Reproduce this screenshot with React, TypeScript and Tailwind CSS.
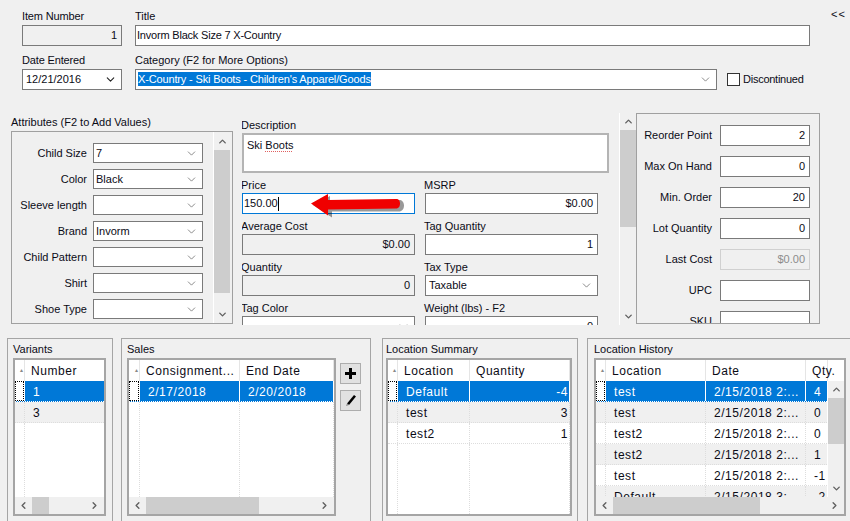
import type { ReactNode } from 'react';
import { ChevronDown, ChevronUp, ChevronLeft, ChevronRight } from 'lucide-react';
import clsx from 'clsx';

function Arrow({ dir, className }: { dir: 'up' | 'down' | 'left' | 'right'; className?: string }) {
  const Icon = { up: ChevronUp, down: ChevronDown, left: ChevronLeft, right: ChevronRight }[dir];
  return <Icon size={11} strokeWidth={3} className={clsx('text-[#606060]', className)} />;
}

function VScroll({ before, thumb }: { before: number; thumb: number }) {
  return (
    <div className="w-[17px] shrink-0 border-l border-white bg-[#f0f0f0] flex flex-col items-stretch">
      <div className="flex items-center justify-center" style={{ height: before }}>
        <Arrow dir="up" />
      </div>
      <div className="bg-[#cdcdcd]" style={{ height: thumb }} />
      <div className="flex-1 flex items-end justify-center pb-[3px]">
        <Arrow dir="down" />
      </div>
    </div>
  );
}

function HScroll({ before, thumb }: { before: number; thumb: number }) {
  return (
    <div className="h-[17px] shrink-0 bg-[#f0f0f0] flex items-stretch">
      <div className="flex items-center justify-center" style={{ width: before }}>
        <Arrow dir="left" />
      </div>
      <div className="bg-[#cdcdcd]" style={{ width: thumb }} />
      <div className="flex-1 flex items-center justify-end pr-[4px]">
        <Arrow dir="right" />
      </div>
    </div>
  );
}

function Label({ children }: { children: ReactNode }) {
  return <div className="h-[16px] leading-[16px] -ml-px whitespace-nowrap">{children}</div>;
}

function Input({
  value,
  right,
  disabled,
  dim,
  focus,
  tight,
  className,
}: {
  value?: ReactNode;
  right?: boolean;
  disabled?: boolean;
  dim?: boolean;
  focus?: boolean;
  tight?: boolean;
  className?: string;
}) {
  return (
    <div
      className={clsx(
        'h-[21px] border flex items-center leading-none whitespace-nowrap',
        tight ? 'px-px' : 'px-[4px]',
        right && 'justify-end',
        disabled ? 'bg-[#f0f0f0]' : 'bg-white',
        dim ? 'border-[#d0d0d0] text-[#8c8c8c]' : focus ? 'border-[#0078d7]' : 'border-[#7a7a7a]',
        className,
      )}
    >
      {value}
    </div>
  );
}

function Combo({ value, className, dark }: { value?: ReactNode; className?: string; dark?: boolean }) {
  return (
    <div className={clsx('border border-[#7a7a7a] bg-white flex items-center pr-[4px] leading-none', className)}>
      <div className="flex-1 whitespace-nowrap">{value}</div>
      <ChevronDown size={13} strokeWidth={dark ? 2 : 1.25} className={dark ? 'text-[#222]' : 'text-[#555]'} />
    </div>
  );
}

function Attr({ label, value }: { label: string; value?: string }) {
  return (
    <div className="flex items-center h-[20px]">
      <div className="w-[75px] text-right whitespace-nowrap">{label}</div>
      <Combo value={value} className="ml-[6px] w-[110px] h-[20px] pl-[2px]" />
    </div>
  );
}

function Stock({ label, value, disabled }: { label: string; value?: string; disabled?: boolean }) {
  return (
    <div className="flex items-center h-[21px] shrink-0">
      <div className="w-[75px] text-right whitespace-nowrap">{label}</div>
      <Input value={value} right disabled={disabled} dim={disabled} className="ml-[8px] w-[90px]" />
    </div>
  );
}

type Col = { name: string; w: number; right?: boolean };

function Grid({
  cols,
  rows,
  head,
  scrollBefore,
  scrollThumb,
  vscroll,
}: {
  cols: Col[];
  rows: string[][];
  head: number;
  scrollBefore?: number;
  scrollThumb?: number;
  vscroll?: boolean;
}) {
  return (
    <div className="h-[158px] border-2 border-[#a5a5a5] bg-white flex flex-col overflow-hidden text-[12px] tracking-[0.55px]">
      <div className="flex h-[21px] shrink-0">
        <div className="shrink-0 border-r border-[#e5e5e5] flex items-center justify-end text-[6px] text-[#888]" style={{ width: head }}>
          ▴
        </div>
        {cols.map((c) => (
          <div key={c.name} className="shrink-0 border-r border-[#e5e5e5] flex items-center pl-[6px] whitespace-nowrap" style={{ width: c.w }}>
            {c.name}
          </div>
        ))}
      </div>
      <div className="flex-1 min-h-0 flex">
        <div className="flex-1 min-w-0 flex flex-col overflow-hidden">
          {rows.map((r, i) => (
            <div
              key={i}
              className={clsx(
                'flex h-[21px] shrink-0 border-b border-dotted',
                i === 0 ? 'bg-[#0078d7] text-white border-white' : i % 2 ? 'bg-[#f0f0f0] border-[#dddddd]' : 'border-[#dddddd]',
              )}
            >
              <div
                className={clsx('shrink-0 border-r border-dotted', i === 0 ? 'bg-white border-white' : 'border-[#dddddd]')}
                style={{ width: head }}
              >
                {i === 0 && <div className="h-full border border-dotted border-black" />}
              </div>
              {cols.map((c, j) => (
                <div
                  key={c.name}
                  className={clsx(
                    'shrink-0 flex items-center pt-px whitespace-nowrap overflow-hidden',
                    c.right ? 'justify-end pl-[8px] pr-[1px]' : 'pl-[8px]',
                    i === 0 ? 'border-r border-white' : 'border-r border-dotted border-[#dddddd]',
                  )}
                  style={{ width: c.w }}
                >
                  {r[j]}
                </div>
              ))}
            </div>
          ))}
          <div className="flex-1 flex">
            <div className="shrink-0 border-r border-dotted border-[#dddddd]" style={{ width: head }} />
            {cols.map((c) => (
              <div key={c.name} className="shrink-0 border-r border-dotted border-[#dddddd]" style={{ width: c.w }} />
            ))}
          </div>
        </div>
        {vscroll && <VScroll before={17} thumb={46} />}
      </div>
      {scrollThumb !== undefined && <HScroll before={scrollBefore ?? 17} thumb={scrollThumb} />}
    </div>
  );
}

function Group({ title, className, children }: { title: string; className?: string; children: ReactNode }) {
  return (
    <div className={clsx('h-[200px] shrink-0 border border-[#a5a5a5]', className)}>
      <div className="h-[19px] leading-[20px] whitespace-nowrap">{title}</div>
      {children}
    </div>
  );
}

export default function App() {
  return (
    <div className="relative w-[850px] h-[521px] overflow-hidden bg-[#f0f0f0] text-[11px] text-[#0b0b16] font-['Liberation_Sans',sans-serif]">
      {/* top fields */}
      <div className="h-[113px] flex pl-[22px] pt-[8px]">
        <div className="w-[100px] shrink-0">
          <div className="h-[17px] leading-[16px] tracking-[-0.15px]">Item Number</div>
          <Input value="1" right disabled />
          <div className="mt-[5px] h-[18px] leading-[18px] tracking-[-0.15px]">Date Entered</div>
          <Combo value="12/21/2016" className="h-[21px] pl-[3px]" dark />
        </div>
        <div className="ml-[13px] w-[675px] shrink-0">
          <div className="h-[17px] leading-[16px]">Title</div>
          <Input value={<span className="tracking-[-0.2px]">Invorm Black Size 7 X-Country</span>} tight />
          <div className="mt-[5px] h-[18px] leading-[18px]">Category (F2 for More Options)</div>
          <div className="flex items-center">
            <Combo
              value={
                <span className="bg-[#0078d7] text-white py-px tracking-[-0.15px]">
                  X-Country - Ski Boots - Children's Apparel/Goods
                </span>
              }
              className="w-[582px] h-[21px] pl-[2px] shrink-0"
            />
            <div className="ml-[10px] w-[13px] h-[13px] border border-[#333] bg-white shrink-0" />
            <span className="ml-[3px] tracking-[-0.25px]">Discontinued</span>
          </div>
        </div>
        <div className="ml-[21px] leading-[10px] mt-[1px] tracking-[1px]">&lt;&lt;</div>
      </div>

      {/* middle */}
      <div className="h-[212px] flex pl-[11px] overflow-hidden">
        <div className="w-[222px] shrink-0 mt-[1px]">
          <div className="h-[17px] leading-[16px] whitespace-nowrap">Attributes (F2 to Add Values)</div>
          <div className="h-[193px] border border-[#a0a0a0] flex">
            <div className="flex-1 pt-[11px] flex flex-col gap-[6px]">
              <Attr label="Child Size" value="7" />
              <Attr label="Color" value="Black" />
              <Attr label="Sleeve length" />
              <Attr label="Brand" value="Invorm" />
              <Attr label="Child Pattern" />
              <Attr label="Shirt" />
              <Attr label="Shoe Type" />
            </div>
            <VScroll before={18} thumb={143} />
            <div className="w-[2px]" />
          </div>
        </div>

        <div className="ml-[9px] w-[377px] shrink-0 pt-[4px] overflow-hidden">
          <Label>Description</Label>
          <div className="w-[367px] h-[40px] border-2 border-[#b4b4b4] bg-white px-[3px] pt-[2px] leading-[16px]">
            Ski <span className="underline decoration-dotted decoration-[#e06060] underline-offset-2">Boots</span>
          </div>
          <div className="mt-[4px] grid grid-cols-[173px_173px] gap-x-[10px] gap-y-[4px]">
            <div>
              <Label>Price</Label>
              <Input
                value={
                  <>
                    150.00<span className="inline-block w-px h-[14px] bg-black" />
                  </>
                }
                focus
                tight
              />
            </div>
            <div>
              <Label>MSRP</Label>
              <Input value="$0.00" right />
            </div>
            <div>
              <Label>Average Cost</Label>
              <Input value="$0.00" right disabled />
            </div>
            <div>
              <Label>Tag Quantity</Label>
              <Input value="1" right />
            </div>
            <div>
              <Label>Quantity</Label>
              <Input value="0" right disabled />
            </div>
            <div>
              <Label>Tax Type</Label>
              <Combo value="Taxable" className="h-[21px] pl-[3px]" />
            </div>
            <div>
              <Label>Tag Color</Label>
              <Combo className="h-[21px] pl-[2px]" />
            </div>
            <div>
              <Label>Weight (lbs) - F2</Label>
              <Input value="0" right />
            </div>
          </div>
        </div>

        <VScroll before={17} thumb={97} />

        <div className="w-[184px] shrink-0 h-[211px] border border-[#a0a0a0] pt-[11px] flex flex-col gap-[10px] overflow-hidden">
          <Stock label="Reorder Point" value="2" />
          <Stock label="Max On Hand" value="0" />
          <Stock label="Min. Order" value="20" />
          <Stock label="Lot Quantity" value="0" />
          <Stock label="Last Cost" value="$0.00" disabled />
          <Stock label="UPC" />
          <Stock label="SKU" />
        </div>
      </div>

      {/* bottom groups */}
      <div className="mt-[13px] flex pl-[7px] items-start">
        <Group title="Variants" className="w-[106px] px-[5px]">
          <div className="w-[93px]">
            <Grid head={10} cols={[{ name: 'Number', w: 80 }]} rows={[['1'], ['3']]} scrollBefore={17} scrollThumb={17} />
          </div>
        </Group>
        <Group title="Sales" className="ml-[8px] w-[250px] px-[5px]">
          <div className="flex items-start">
            <div className="w-[209px] shrink-0">
              <Grid
                head={11}
                cols={[
                  { name: 'Consignment...', w: 100 },
                  { name: 'End Date', w: 94 },
                ]}
                rows={[['2/17/2018', '2/20/2018']]}
                scrollBefore={17}
                scrollThumb={113}
              />
            </div>
            <div className="ml-[4px] mt-[5px] flex flex-col gap-[6px]">
              <button className="w-[21px] h-[21px] bg-[#e1e1e1] border border-[#adadad] flex items-center justify-center">
                <svg width="11" height="11" viewBox="0 0 11 11">
                  <path d="M4 0h3v4h4v3H7v4H4V7H0V4h4z" fill="#000" />
                </svg>
              </button>
              <button className="w-[21px] h-[21px] bg-[#e1e1e1] border border-[#adadad] flex items-center justify-center">
                <svg width="13" height="13" viewBox="0 0 13 13">
                  <path d="M10 1l2 1.5L5 11 3 9.500z" fill="#000" />
                  <path d="M3 9.500L5 11 2 12z" fill="#888" />
                </svg>
              </button>
            </div>
          </div>
        </Group>
        <Group title="Location Summary" className="ml-[11px] w-[196px] px-[3px]">
          <div className="w-[186px]">
            <Grid
              head={10}
              cols={[
                { name: 'Location', w: 72 },
                { name: 'Quantity', w: 100, right: true },
              ]}
              rows={[
                ['Default', '-4'],
                ['test', '3'],
                ['test2', '1'],
              ]}
            />
          </div>
        </Group>
        <Group title="Location History" className="ml-[9px] w-[270px] px-[6px]">
          <div className="w-[252px]">
            <Grid
              head={10}
              vscroll
              cols={[
                { name: 'Location', w: 100 },
                { name: 'Date', w: 100 },
                { name: 'Qty.', w: 22 },
              ]}
              rows={[
                ['test', '2/15/2018 2:...', '4'],
                ['test', '2/15/2018 2:...', '0'],
                ['test2', '2/15/2018 2:...', '0'],
                ['test2', '2/15/2018 2:...', '1'],
                ['test', '2/15/2018 2:...', '-1'],
                ['Default', '2/15/2018 3:...', '-2'],
              ]}
              scrollBefore={17}
              scrollThumb={147}
            />
          </div>
        </Group>
      </div>

      {/* annotation arrow on top of the price box */}
      <svg className="absolute left-[308px] top-[190px]" width="98" height="30" viewBox="0 0 98 30">
        <path d="M5 15L22 6v4l69 0c3 0 5 2 5 5.500s-2 6-5 6l-67 0v6z" fill="#000" opacity="0.4" />
        <path d="M3 13.500L20 4v6l68-1c3 0 4 2 4 4.500s-1 5-4 5l-68 1v6z" fill="#f00000" />
      </svg>
    </div>
  );
}
